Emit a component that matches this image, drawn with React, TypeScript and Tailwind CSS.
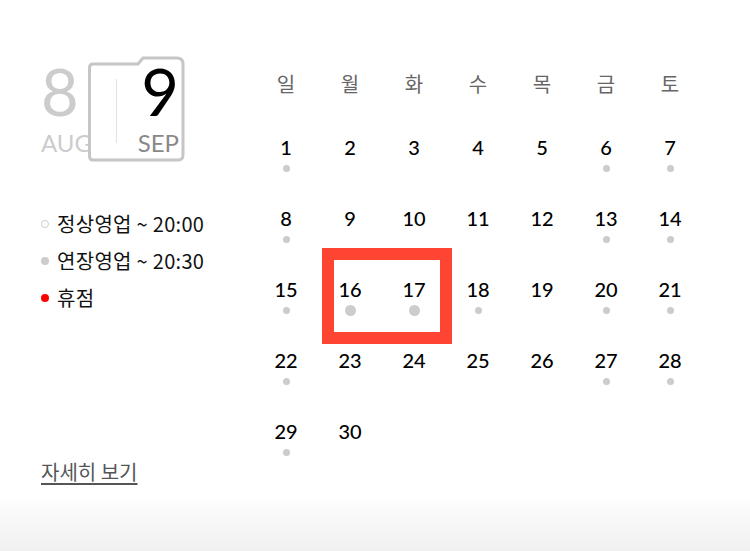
import React from 'react';

const WEEK = ['일', '월', '화', '수', '목', '금', '토'];

// days that carry a grey dot (extended hours)
const DOTTED = new Set([1, 6, 7, 8, 13, 14, 15, 16, 17, 18, 20, 21, 22, 27, 28, 29]);
const BIG_DOT = new Set([16, 17]);

function DateFlip() {
  return (
    <div className="flex items-start">
      <div className="flex w-[47px] flex-col items-start pt-[3px] text-[#cccccc]">
        <span className="text-[65px] leading-none">8</span>
        <span className="mt-[7px] text-[24px] leading-none">AUG</span>
      </div>
      <div className="relative flex h-[106px] w-[97px] flex-col items-end pr-[6px]">
        <svg className="absolute left-0 top-0" width="97" height="106" viewBox="0 0 97 106" fill="none">
          <path
            d="M5 8 H50 L55 2 H89 Q95 2 95 8 V99 Q95 104 90 104 H5 Q1.5 104 1.5 100 V12 Q1.5 8 5 8 Z"
            stroke="#c6c6c6"
            strokeWidth="3"
            fill="#fff"
          />
          <line x1="28.5" y1="23" x2="28.5" y2="87" stroke="#e2e2e2" strokeWidth="1" />
        </svg>
        <span className="relative pt-[3px] text-[65px] leading-none text-black">9</span>
        <span className="relative mt-[7px] text-[24px] leading-none text-[#888888]">SEP</span>
      </div>
    </div>
  );
}

function Legend() {
  return (
    <ul className="mt-[50px] flex flex-col gap-[13px] font-['Noto_Sans_CJK_KR',sans-serif] text-[20px] leading-[24px] tracking-[0.3px] text-[#111]">
      <li className="flex items-center gap-[8px]">
        <span className="h-[8px] w-[8px] rounded-full border border-[#cccccc]" />
        <span>정상영업 ~ 20:00</span>
      </li>
      <li className="flex items-center gap-[8px]">
        <span className="h-[8px] w-[8px] rounded-full bg-[#cccccc]" />
        <span>연장영업 ~ 20:30</span>
      </li>
      <li className="flex items-center gap-[8px]">
        <span className="h-[8px] w-[8px] rounded-full bg-[#ff0000]" />
        <span>휴점</span>
      </li>
    </ul>
  );
}

function Calendar() {
  const days = Array.from({ length: 30 }, (_, i) => i + 1);
  return (
    <div className="relative w-[448px] pt-[64px]">
      <div className="grid grid-cols-7">
        {WEEK.map((w) => (
          <div key={w} className="flex h-[40px] items-center justify-center text-[20px] text-[#666666]">
            {w}
          </div>
        ))}
        {days.map((d) => (
          <div key={d} className="flex h-[71px] flex-col items-center pt-[31px]">
            <span className="text-[20px] font-medium leading-[24px] text-black">{d}</span>
            {DOTTED.has(d) && (
              <span
                className={
                  BIG_DOT.has(d)
                    ? 'mt-[4px] h-[11px] w-[11px] rounded-full bg-[#cccccc]'
                    : 'mt-[6px] h-[7px] w-[7px] rounded-full bg-[#cccccc]'
                }
              />
            )}
          </div>
        ))}
      </div>
      {/* highlight around 16 - 17 */}
      <div className="absolute left-[68px] top-[248px] h-[96px] w-[130px] border-[12px] border-[#fe4532]" />
    </div>
  );
}

export default function App() {
  return (
    <div className="flex h-[551px] w-[750px] bg-[linear-gradient(to_bottom,#ffffff_495px,#f0f0f0_551px)] font-['Lato','Noto_Sans_CJK_KR',sans-serif]">
      <div className="flex w-[254px] flex-col pl-[41px] pt-[56px]">
        <DateFlip />
        <Legend />
        <a
          href="#"
          className="mt-[150px] self-start font-['Noto_Sans_CJK_KR',sans-serif] text-[20px] leading-[24px] text-[#555555] underline underline-offset-[3px]"
        >
          자세히 보기
        </a>
      </div>
      <Calendar />
    </div>
  );
}
